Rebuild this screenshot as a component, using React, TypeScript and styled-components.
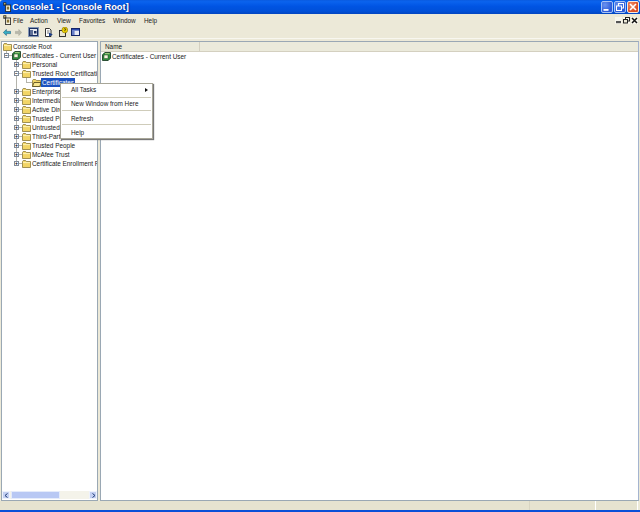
import { FC } from 'react';
import styled, { createGlobalStyle } from 'styled-components';

const GlobalStyle = createGlobalStyle`
  html, body {
    margin: 0;
    padding: 0;
    width: 640px;
    height: 512px;
    overflow: hidden;
    background: #ece9d8;
  }
  * { box-sizing: border-box; }
`;

type TreeItem = { label: string; level: number; expander?: 'plus' | 'minus'; kind?: 'folder' | 'cert' | 'open' };

const treeItems: TreeItem[] = [
  { label: 'Console Root', level: 0 },
  { label: 'Certificates - Current User', level: 1, expander: 'minus', kind: 'cert' },
  { label: 'Personal', level: 2, expander: 'plus' },
  { label: 'Trusted Root Certification Authorities', level: 2, expander: 'minus' },
  { label: 'Certificates', level: 3, kind: 'open' },
  { label: 'Enterprise Trust', level: 2, expander: 'plus' },
  { label: 'Intermediate Certification Authorities', level: 2, expander: 'plus' },
  { label: 'Active Directory User Object', level: 2, expander: 'plus' },
  { label: 'Trusted Publishers', level: 2, expander: 'plus' },
  { label: 'Untrusted Certificates', level: 2, expander: 'plus' },
  { label: 'Third-Party Root Certification Authorities', level: 2, expander: 'plus' },
  { label: 'Trusted People', level: 2, expander: 'plus' },
  { label: 'McAfee Trust', level: 2, expander: 'plus' },
  { label: 'Certificate Enrollment Requests', level: 2, expander: 'plus' },
];

const menus = [
  { label: 'File', width: 17 },
  { label: 'Action', width: 27 },
  { label: 'View', width: 22 },
  { label: 'Favorites', width: 34 },
  { label: 'Window', width: 31 },
  { label: 'Help', width: 20 },
];

const FolderIcon: FC<{ open?: boolean }> = ({ open }) => (
  <svg width="9" height="8" viewBox="0 0 9 8">
    <path d="M0.5 1.5 L1.2 0.5 H3.6 L4.4 1.5 H8.5 V7.5 H0.5 Z" fill="#f2d566" stroke="#8a7a3a" strokeWidth="0.8" />
    {open && <path d="M2 3.5 H9 L7.8 7.5 H0.5 Z" fill="#f8e690" stroke="#4c4218" strokeWidth="0.8" />}
    {!open && <path d="M1 2.6 H8" stroke="#fdf2b4" strokeWidth="1" />}
  </svg>
);

const CertIcon: FC = () => (
  <svg width="9" height="9" viewBox="0 0 9 9">
    <path d="M0.5 2.8 L2.8 0.5 H8.5 V6.2 L6.2 8.5 H0.5 Z" fill="#2f8f3c" stroke="#10301a" strokeWidth="0.8" />
    <rect x="2" y="3" width="4" height="3.6" fill="#f4f6dc" stroke="#1c3a20" strokeWidth="0.5" />
    <path d="M3 1.7 H7.6" stroke="#d8e8a0" strokeWidth="0.8" />
  </svg>
);

const AppGlyph: FC = () => (
  <svg width="8" height="10" viewBox="0 0 8 10">
    <rect x="0.3" y="0.3" width="3" height="3.4" fill="#2a2a2a" />
    <rect x="1.1" y="1.2" width="1.4" height="1.2" fill="#f4e080" />
    <rect x="2.6" y="3" width="5" height="6.6" fill="#f8f4e0" stroke="#2a2a2a" strokeWidth="0.9" />
    <rect x="3.8" y="4.6" width="2.4" height="3" fill="#8a7434" />
  </svg>
);

const App: FC = () => {
  return (
    <Window>
      <GlobalStyle />
      <TitleBar>
        <TitleIcon>
          <AppGlyph />
        </TitleIcon>
        <TitleText>Console1 - [Console Root]</TitleText>
        <CaptionButtons>
          <CaptionButton>
            <svg width="10" height="10" viewBox="0 0 10 10"><rect x="1.5" y="7" width="5" height="1.8" fill="#fff" /></svg>
          </CaptionButton>
          <CaptionButton>
            <svg width="10" height="10" viewBox="0 0 10 10">
              <rect x="3.5" y="1.5" width="5" height="4.5" fill="none" stroke="#fff" />
              <rect x="1.5" y="4" width="5" height="4.5" fill="#3f6fe4" stroke="#fff" />
            </svg>
          </CaptionButton>
          <CaptionButton $close>
            <svg width="10" height="10" viewBox="0 0 10 10"><path d="M2 2 L8 8 M8 2 L2 8" stroke="#fff" strokeWidth="1.6" /></svg>
          </CaptionButton>
        </CaptionButtons>
      </TitleBar>

      <MenuBar>
        <MenuIcon>
          <AppGlyph />
        </MenuIcon>
        {menus.map((m) => (
          <MenuItem key={m.label} $width={m.width}>{m.label}</MenuItem>
        ))}
        <ChildButtons>
          <ChildButton>
            <svg width="7" height="7" viewBox="0 0 7 7"><rect x="1" y="4" width="5" height="2.2" fill="#555" /></svg>
          </ChildButton>
          <ChildButton>
            <svg width="7" height="7" viewBox="0 0 7 7">
              <rect x="2.5" y="0.5" width="4" height="3.5" fill="none" stroke="#222" />
              <rect x="0.5" y="2.5" width="4" height="3.5" fill="#ece9d8" stroke="#222" />
            </svg>
          </ChildButton>
          <ChildButton>
            <svg width="7" height="7" viewBox="0 0 7 7"><path d="M1 1 L6 6 M6 1 L1 6" stroke="#111" strokeWidth="1.5" /></svg>
          </ChildButton>
        </ChildButtons>
      </MenuBar>

      <ToolBar>
        <ToolButton>
          <svg width="8" height="7" viewBox="0 0 8 7"><path d="M0.3 3.5 L3.4 0.5 V2.4 H7.7 V4.6 H3.4 V6.5 Z" fill="#35b0c4" stroke="#1a5f86" strokeWidth="0.6" /></svg>
        </ToolButton>
        <ToolButton>
          <svg width="7" height="7" viewBox="0 0 7 7"><path d="M6.7 3.5 L3.8 0.5 V2.4 H0.3 V4.6 H3.8 V6.5 Z" fill="#b8b8aa" stroke="#a0a094" strokeWidth="0.5" /></svg>
        </ToolButton>
        <ToolGap />
        <ToolButton $active>
          <svg width="9" height="8" viewBox="0 0 9 8">
            <rect x="0.5" y="0.5" width="8" height="7" fill="#e8eaf0" stroke="#1a2f62" />
            <rect x="1" y="2" width="3" height="5" fill="#5e6f96" />
            <rect x="5" y="3" width="2.5" height="2.5" fill="#1a2f62" />
          </svg>
        </ToolButton>
        <ToolGap />
        <ToolButton>
          <svg width="8" height="9" viewBox="0 0 8 9">
            <path d="M0.5 0.5 H4.5 L6 2 V8.5 H0.5 Z" fill="#fff" stroke="#1c1c1c" strokeWidth="0.9" />
            <path d="M2 3 H4.5 M2 5 H4" stroke="#333" strokeWidth="0.7" />
            <path d="M4 4.5 L7.8 6.5 L4 8.8 Z" fill="#1d3f88" />
          </svg>
        </ToolButton>
        <ToolGap />
        <ToolButton>
          <svg width="9" height="10" viewBox="0 0 9 10">
            <rect x="0.5" y="3.5" width="6" height="6" fill="#ebe7d2" stroke="#222" strokeWidth="0.9" />
            <circle cx="5.8" cy="3" r="2.9" fill="#f4d800" stroke="#6a5400" strokeWidth="0.5" />
            <path d="M4.8 2.2 Q5.8 1 6.8 2.2 Q6.8 3 5.8 3.4 V4.2" fill="none" stroke="#222" strokeWidth="0.8" />
          </svg>
        </ToolButton>
        <ToolButton>
          <svg width="9" height="8" viewBox="0 0 9 8">
            <rect x="0.5" y="0.5" width="8" height="7" fill="#e8eaf4" stroke="#14266a" />
            <rect x="1" y="1" width="7" height="1.6" fill="#2a4ab0" />
            <rect x="1" y="2.6" width="2.6" height="4.4" fill="#6a80c8" />
          </svg>
        </ToolButton>
      </ToolBar>

      <Workspace>
        <TreePane>
          <TreeScroll>
            {treeItems.map((item, index) => (
              <TreeRow
                key={item.label}
                $level={item.level}
                $lastInGroup={index === treeItems.length - 1}
              >
                {item.level > 0 && (
                  <ExpanderSlot $elbow={item.level !== 2}>
                    {item.expander && <Expander>{item.expander === 'plus' ? '+' : '−'}</Expander>}
                  </ExpanderSlot>
                )}
                <RowIcon $afterSlot={item.level > 0}>
                  {item.kind === 'cert' ? <CertIcon /> : <FolderIcon open={item.kind === 'open'} />}
                </RowIcon>
                <RowLabel $selected={item.kind === 'open'}>{item.label}</RowLabel>
              </TreeRow>
            ))}
          </TreeScroll>
          <HScroll>
            <ScrollButton>
              <svg width="5" height="5" viewBox="0 0 5 5"><path d="M3.5 0.5 L1 2.5 L3.5 4.5" fill="none" stroke="#233f7a" strokeWidth="1" /></svg>
            </ScrollButton>
            <ScrollTrack>
              <ScrollThumb />
            </ScrollTrack>
            <ScrollButton>
              <svg width="5" height="5" viewBox="0 0 5 5"><path d="M1.5 0.5 L4 2.5 L1.5 4.5" fill="none" stroke="#233f7a" strokeWidth="1" /></svg>
            </ScrollButton>
          </HScroll>
        </TreePane>

        <ListPane>
          <ListHeader>
            <HeaderCell>Name</HeaderCell>
            <HeaderRest />
          </ListHeader>
          <ListRow>
            <CertIcon />
            <span>Certificates - Current User</span>
          </ListRow>
        </ListPane>
      </Workspace>

      <StatusBar>
        <StatusCell $grow $divider="#d9d5c2" />
        <StatusCell $width={66} $divider="#ffffff" />
        <StatusCell $width={42} $divider="#ffffff" />
      </StatusBar>
      <BottomEdge />

      <ContextMenu>
        <MenuEntry $nudge={-1}>
          All Tasks
          <SubArrow />
        </MenuEntry>
        <MenuSeparator />
        <MenuEntry>New Window from Here</MenuEntry>
        <MenuSeparator />
        <MenuEntry $nudge={1}>Refresh</MenuEntry>
        <MenuSeparator />
        <MenuEntry $nudge={1}>Help</MenuEntry>
      </ContextMenu>
    </Window>
  );
};

export default App;

const uiFont = `"Liberation Sans", Arial, sans-serif`;

const Window = styled.div`
  position: relative;
  width: 640px;
  height: 512px;
  display: flex;
  flex-direction: column;
  overflow: hidden;
  background: #ece9d8;
  font-family: ${uiFont};
  font-size: 6.4px;
  color: #222;
`;

const TitleBar = styled.div`
  height: 14px;
  flex: none;
  display: flex;
  align-items: center;
  padding: 0 1px 0 3px;
  border-radius: 3px 3px 0 0;
  background: linear-gradient(180deg, #0a5be0 0%, #0a63ee 12%, #0054e3 45%, #0050d8 80%, #0245c0 100%);
`;

const TitleIcon = styled.div`
  width: 9px;
  height: 10px;
  display: flex;
`;

const TitleText = styled.div`
  font-size: 9.3px;
  font-weight: 700;
  color: #fff;
  text-shadow: 1px 0 1px #0b2f8f;
  white-space: nowrap;
`;

const CaptionButtons = styled.div`
  margin-left: auto;
  display: flex;
  gap: 1px;
`;

const CaptionButton = styled.div<{ $close?: boolean }>`
  width: 12px;
  height: 12px;
  border: 1px solid ${(p) => (p.$close ? '#f4e8e0' : '#a8c4f4')};
  border-radius: 2px;
  display: flex;
  align-items: center;
  justify-content: center;
  overflow: hidden;
  background: ${(p) =>
    p.$close
      ? 'radial-gradient(circle at 30% 30%, #ee8c68, #dc4c22 70%)'
      : 'radial-gradient(circle at 30% 30%, #6a94f0, #2c5ad8 70%)'};
`;

const MenuBar = styled.div`
  height: 12px;
  flex: none;
  display: flex;
  align-items: center;
  padding: 0 2px 0 3px;
  background: #ece9d8;
`;

const MenuIcon = styled.div`
  width: 10px;
  height: 10px;
  display: flex;
`;

const MenuItem = styled.div<{ $width: number }>`
  width: ${(p) => p.$width}px;
  flex: none;
`;

const ChildButtons = styled.div`
  margin-left: auto;
  display: flex;
  gap: 1px;
`;

const ChildButton = styled.div`
  width: 7px;
  height: 7px;
  display: flex;
  align-items: center;
  justify-content: center;
  background: #f8f6ec;
`;

const ToolBar = styled.div`
  height: 13px;
  flex: none;
  display: flex;
  align-items: center;
  padding: 0 1px;
  gap: 1px;
  background: #ece9d8;
  border-bottom: 1px solid #f8f7f0;
`;

const ToolButton = styled.div<{ $active?: boolean }>`
  width: 11px;
  height: 10px;
  display: flex;
  align-items: center;
  justify-content: center;
  background: ${(p) => (p.$active ? '#f4f3ea' : 'transparent')};
  border: 1px solid ${(p) => (p.$active ? '#8496b4' : 'transparent')};
`;

const ToolGap = styled.div`
  width: 2px;
  height: 9px;
  flex: none;
`;

const Workspace = styled.div`
  flex: 1;
  min-height: 0;
  display: flex;
  gap: 2px;
  padding: 2px 1px 0 1px;
`;

const TreePane = styled.div`
  width: 97px;
  flex: none;
  display: flex;
  flex-direction: column;
  background: #fff;
  border: 1px solid #9aa8b4;
  overflow: hidden;
`;

const TreeScroll = styled.div`
  flex: 1;
  overflow: hidden;
`;

const TreeRow = styled.div<{ $level: number; $lastInGroup?: boolean }>`
  position: relative;
  height: 9px;
  display: flex;
  align-items: center;
  white-space: nowrap;
  padding-left: ${(p) => (p.$level === 0 ? 1 : (p.$level - 1) * 10)}px;

  &::before {
    content: '';
    display: ${(p) => (p.$level >= 2 ? 'block' : 'none')};
    position: absolute;
    left: 14px;
    top: 0;
    width: 1px;
    height: ${(p) => (p.$lastInGroup ? '50%' : '100%')};
    background: #b4b4ac;
  }
`;

const ExpanderSlot = styled.div<{ $elbow?: boolean }>`
  position: relative;
  width: 9px;
  height: 100%;
  flex: none;
  display: flex;
  align-items: center;
  justify-content: center;

  &::before {
    content: '';
    position: absolute;
    left: 4px;
    right: -1px;
    top: 4px;
    height: 1px;
    background: #b4b4ac;
  }

  &::after {
    content: '';
    display: ${(p) => (p.$elbow ? 'block' : 'none')};
    position: absolute;
    left: 4px;
    top: 0;
    width: 1px;
    height: 5px;
    background: #b4b4ac;
  }
`;

const Expander = styled.div`
  position: relative;
  z-index: 1;
  width: 5px;
  height: 5px;
  border: 1px solid #7f8a98;
  background: #fff;
  font-size: 5px;
  font-weight: 700;
  line-height: 3px;
  text-align: center;
  color: #000;
  overflow: hidden;
`;

const RowIcon = styled.div<{ $afterSlot?: boolean }>`
  width: 9px;
  height: 9px;
  flex: none;
  display: flex;
  align-items: center;
  margin-left: ${(p) => (p.$afterSlot ? 1 : 0)}px;
`;

const RowLabel = styled.div<{ $selected?: boolean }>`
  padding: 0 1px;
  line-height: 9px;
  background: ${(p) => (p.$selected ? '#1c52c0' : 'transparent')};
  color: ${(p) => (p.$selected ? '#fff' : '#222')};
`;

const HScroll = styled.div`
  height: 8px;
  margin-bottom: 1px;
  flex: none;
  display: flex;
  background: #f6f5ee;
`;

const ScrollButton = styled.div`
  width: 8px;
  flex: none;
  display: flex;
  align-items: center;
  justify-content: center;
  background: #c4d0f2;
  border: 1px solid #eef2fc;
`;

const ScrollTrack = styled.div`
  flex: 1;
  display: flex;
  padding-left: 1px;
  background: #f4f3ea;
`;

const ScrollThumb = styled.div`
  width: 49px;
  background: #b8c8f4;
  border: 1px solid #e4ebfb;
`;

const ListPane = styled.div`
  flex: 1;
  min-width: 0;
  background: #fff;
  border: 1px solid #9aa8b4;
  border-right-color: #a4b4d0;
  display: flex;
  flex-direction: column;
`;

const ListHeader = styled.div`
  height: 10px;
  flex: none;
  display: flex;
  background: #ebeadb;
  border-bottom: 1px solid #d4d0c0;
`;

const HeaderCell = styled.div`
  width: 99px;
  padding-left: 4px;
  line-height: 10px;
  border-right: 1px solid #d4d0c0;
`;

const HeaderRest = styled.div`
  flex: 1;
`;

const ListRow = styled.div`
  height: 9px;
  padding-left: 1px;
  display: flex;
  align-items: center;
  gap: 1px;
  white-space: nowrap;
`;

const StatusBar = styled.div`
  height: 9px;
  flex: none;
  display: flex;
  padding-right: 2px;
  background: #ece9d8;
`;

const StatusCell = styled.div<{ $grow?: boolean; $width?: number; $divider: string }>`
  flex: ${(p) => (p.$grow ? '1' : 'none')};
  width: ${(p) => (p.$width ? `${p.$width}px` : 'auto')};
  background: #e6e3d0;
  border-right: 1px solid ${(p) => p.$divider};
`;

const BottomEdge = styled.div`
  height: 2px;
  flex: none;
  background: #0a50d8;
`;

const ContextMenu = styled.div`
  position: absolute;
  left: 60px;
  top: 83px;
  width: 93px;
  height: 56px;
  background: #fff;
  border: 1px solid #a8a698;
  box-shadow: 1px 1px 1px #777;
  display: flex;
  flex-direction: column;
`;

const MenuEntry = styled.div<{ $nudge?: number }>`
  position: relative;
  flex: 1;
  padding-left: 10px;
  padding-top: ${(p) => (p.$nudge && p.$nudge > 0 ? p.$nudge * 2 : 0)}px;
  padding-bottom: ${(p) => (p.$nudge && p.$nudge < 0 ? -p.$nudge * 2 : 0)}px;
  display: flex;
  align-items: center;
  white-space: nowrap;
`;

const SubArrow = styled.div`
  position: absolute;
  right: 4px;
  top: 50%;
  margin-top: -3px;
  border-left: 3px solid #111;
  border-top: 2px solid transparent;
  border-bottom: 2px solid transparent;
`;

const MenuSeparator = styled.div`
  height: 1px;
  flex: none;
  margin: 0 1px;
  background: #cfccba;
`;
